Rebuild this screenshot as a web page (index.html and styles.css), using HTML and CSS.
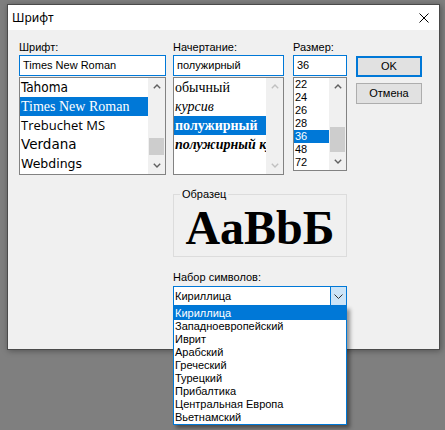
FILE: index.html
```html
<!DOCTYPE html>
<html lang="ru">
<head>
<meta charset="utf-8">
<title>Шрифт</title>
<link rel="stylesheet" href="styles.css">
</head>
<body>
<div class="screen">
  <div class="dialog">
    <div class="titlebar">
      <span class="title">Шрифт</span>
      <svg class="close" width="10" height="10" viewBox="0 0 10 10"><path d="M0.5 0.5 L9.5 9.5 M9.5 0.5 L0.5 9.5" stroke="#000" stroke-width="1" fill="none"/></svg>
    </div>
    <div class="body">
      <div class="grid">
        <div class="col c-font">
          <div class="label">Шрифт:</div>
          <div class="edit">Times New Roman</div>
          <div class="listbox">
            <div class="items">
              <div class="item f-tahoma">Tahoma</div>
              <div class="item f-times sel">Times New Roman</div>
              <div class="item f-trebuchet">Trebuchet MS</div>
              <div class="item f-verdana">Verdana</div>
              <div class="item f-webdings">Webdings</div>
            </div>
            <div class="sb">
              <div class="sb-btn"><svg width="8" height="5" viewBox="0 0 8 5"><path d="M0.8 4.3 L4 1.1 L7.2 4.3" stroke="#606060" stroke-width="1.4" fill="none"/></svg></div>
              <div class="sb-track"><div class="thumb thumb-font"></div></div>
              <div class="sb-btn"><svg width="8" height="5" viewBox="0 0 8 5"><path d="M0.8 0.7 L4 3.9 L7.2 0.7" stroke="#606060" stroke-width="1.4" fill="none"/></svg></div>
            </div>
          </div>
        </div>
        <div class="col c-style">
          <div class="label">Начертание:</div>
          <div class="edit">полужирный</div>
          <div class="listbox">
            <div class="items serif">
              <div class="item">обычный</div>
              <div class="item it">курсив</div>
              <div class="item bd sel">полужирный</div>
              <div class="item bd it">полужирный курсив</div>
            </div>
            <div class="sb disabled">
              <div class="sb-btn"><svg width="8" height="5" viewBox="0 0 8 5"><path d="M0.8 4.3 L4 1.1 L7.2 4.3" stroke="#c0c0c0" stroke-width="1.4" fill="none"/></svg></div>
              <div class="sb-track"></div>
              <div class="sb-btn"><svg width="8" height="5" viewBox="0 0 8 5"><path d="M0.8 0.7 L4 3.9 L7.2 0.7" stroke="#c0c0c0" stroke-width="1.4" fill="none"/></svg></div>
            </div>
          </div>
        </div>
        <div class="col c-size">
          <div class="label">Размер:</div>
          <div class="edit">36</div>
          <div class="listbox size">
            <div class="items">
              <div class="item">22</div>
              <div class="item">24</div>
              <div class="item">26</div>
              <div class="item">28</div>
              <div class="item sel">36</div>
              <div class="item">48</div>
              <div class="item">72</div>
            </div>
            <div class="sb">
              <div class="sb-btn"><svg width="8" height="5" viewBox="0 0 8 5"><path d="M0.8 4.3 L4 1.1 L7.2 4.3" stroke="#606060" stroke-width="1.4" fill="none"/></svg></div>
              <div class="sb-track"><div class="thumb thumb-size"></div></div>
              <div class="sb-btn"><svg width="8" height="5" viewBox="0 0 8 5"><path d="M0.8 0.7 L4 3.9 L7.2 0.7" stroke="#606060" stroke-width="1.4" fill="none"/></svg></div>
            </div>
          </div>
        </div>
        <div class="col c-buttons">
          <div class="btn default">OK</div>
          <div class="btn">Отмена</div>
        </div>
        <fieldset class="sample-box">
          <legend>Образец</legend>
          <div class="sample">AaBbБ</div>
        </fieldset>
        <div class="charset">
          <div class="label">Набор символов:</div>
          <div class="combo">
            <div class="combo-text">Кириллица</div>
            <div class="combo-btn"><svg width="9" height="5" viewBox="0 0 9 5"><path d="M0.5 0.5 L4.5 4.5 L8.5 0.5" stroke="#333" stroke-width="1" fill="none"/></svg></div>
            <div class="dropdown">
              <div class="dd-item sel">Кириллица</div>
              <div class="dd-item">Западноевропейский</div>
              <div class="dd-item">Иврит</div>
              <div class="dd-item">Арабский</div>
              <div class="dd-item">Греческий</div>
              <div class="dd-item">Турецкий</div>
              <div class="dd-item">Прибалтика</div>
              <div class="dd-item">Центральная Европа</div>
              <div class="dd-item">Вьетнамский</div>
            </div>
          </div>
        </div>
      </div>
    </div>
  </div>
</div>
</body>
</html>
```
FILE: styles.css
```css
html, body {
  margin: 0;
  background: #7f7f7f;
}
body {
  font-family: "Liberation Sans", Arial, sans-serif;
  font-size: 11px;
  color: #000;
}
.screen {
  height: 430px;
  box-sizing: border-box;
  padding: 4px 0 0 7px;
}
.dialog {
  width: 433px;
  height: 346px;
  box-sizing: border-box;
  border: 1px solid #4a4a4a;
  background: #f0f0f0;
  box-shadow: 1px 1px 6px rgba(0, 0, 0, 0.35);
  display: flex;
  flex-direction: column;
}
.titlebar {
  height: 25px;
  flex: none;
  background: #fff;
  display: flex;
  align-items: center;
  justify-content: space-between;
  padding: 0 10px 0 4px;
}
.title {
  font-family: "Noto Sans", "Open Sans", sans-serif;
  font-size: 12px;
  line-height: 16px;
}
.close {
  display: block;
}
.body {
  flex: 1;
  padding: 11px 0 0 11px;
}
.grid {
  display: grid;
  grid-template-columns: 147px 7px 111px 9px 54px 9px 66px;
  align-items: start;
}
.col {
  display: flex;
  flex-direction: column;
}
.c-font { grid-column: 1; }
.c-style { grid-column: 3; }
.c-size { grid-column: 5; }
.c-buttons { grid-column: 7; padding-top: 15px; }

.label {
  height: 13px;
  line-height: 13px;
  margin-bottom: 1px;
  white-space: nowrap;
}
.edit {
  height: 21px;
  box-sizing: border-box;
  border: 1px solid #0078d7;
  background: #fff;
  line-height: 19px;
  padding-left: 3px;
  margin-bottom: 1px;
  white-space: nowrap;
  overflow: hidden;
}
.listbox {
  height: 98px;
  box-sizing: border-box;
  border: 1px solid #828282;
  background: #fff;
  display: flex;
}
.listbox.size {
  height: 94px;
}
.items {
  flex: 1;
  min-width: 0;
  overflow: hidden;
}
.item {
  height: 19px;
  line-height: 19px;
  padding-left: 1px;
  white-space: nowrap;
  overflow: hidden;
}
.size .item {
  height: 13px;
  line-height: 13px;
}
.sel {
  background: #0078d7;
  color: #fff;
}
.f-tahoma { font-family: "DejaVu Sans Condensed", "DejaVu Sans", sans-serif; font-size: 13.5px; }
.f-times { font-family: "Liberation Serif", serif; font-size: 14px; }
.f-trebuchet { font-family: "Open Sans", sans-serif; font-size: 13px; }
.f-verdana { font-family: "DejaVu Sans", sans-serif; font-size: 13.5px; }
.f-webdings { font-family: "DejaVu Sans", sans-serif; font-size: 12.5px; }
.serif { font-family: "Liberation Serif", serif; font-size: 14px; }
.it { font-style: italic; }
.bd { font-weight: bold; }

.sb {
  width: 17px;
  flex: none;
  background: #f0f0f0;
  display: flex;
  flex-direction: column;
}
.sb-btn {
  height: 17px;
  flex: none;
  display: flex;
  align-items: center;
  justify-content: center;
}
.sb-btn svg { display: block; }
.sb-track {
  flex: 1;
}
.thumb {
  background: #cdcdcd;
  margin: 0 1px;
}
.thumb-font {
  margin-top: 43px;
  height: 17px;
}
.thumb-size {
  margin-top: 32px;
  height: 25px;
}

.btn {
  height: 21px;
  box-sizing: border-box;
  border: 1px solid #adadad;
  background: #e1e1e1;
  text-align: center;
  line-height: 19px;
}
.btn.default {
  border: 2px solid #0078d7;
  line-height: 17px;
}
.btn + .btn {
  margin-top: 6px;
}

.sample-box {
  grid-column: 3 / 6;
  margin: 13px 0 0;
  min-width: 0;
  border: 1px solid #dcdcdc;
  padding: 0 6px 4px;
}
.sample-box legend {
  padding: 0 2px;
  line-height: 13px;
  font-size: 11px;
}
.sample {
  margin-top: 3px;
  height: 48px;
  line-height: 48px;
  text-align: center;
  font-family: "Liberation Serif", serif;
  font-weight: bold;
  font-size: 48px;
  white-space: nowrap;
}

.charset {
  grid-column: 3 / 6;
  margin-top: 14px;
}
.charset .label {
  margin-bottom: 2px;
}
.combo {
  position: relative;
  height: 20px;
  box-sizing: border-box;
  border: 1px solid #0078d7;
  background: #fff;
  display: flex;
}
.combo-text {
  flex: 1;
  line-height: 18px;
  padding-left: 1px;
}
.combo-btn {
  width: 16px;
  box-sizing: border-box;
  background: #cce4f7;
  border-left: 1px solid #0078d7;
  display: flex;
  align-items: center;
  justify-content: center;
}
.combo-btn svg { display: block; }
.dropdown {
  position: absolute;
  left: -1px;
  right: -1px;
  top: 100%;
  margin-top: 1px;
  border: 1px solid #0078d7;
  background: #fff;
  box-shadow: 3px 3px 4px rgba(0, 0, 0, 0.4);
}
.dd-item {
  height: 13px;
  line-height: 13px;
  padding-left: 1px;
  white-space: nowrap;
}
```
